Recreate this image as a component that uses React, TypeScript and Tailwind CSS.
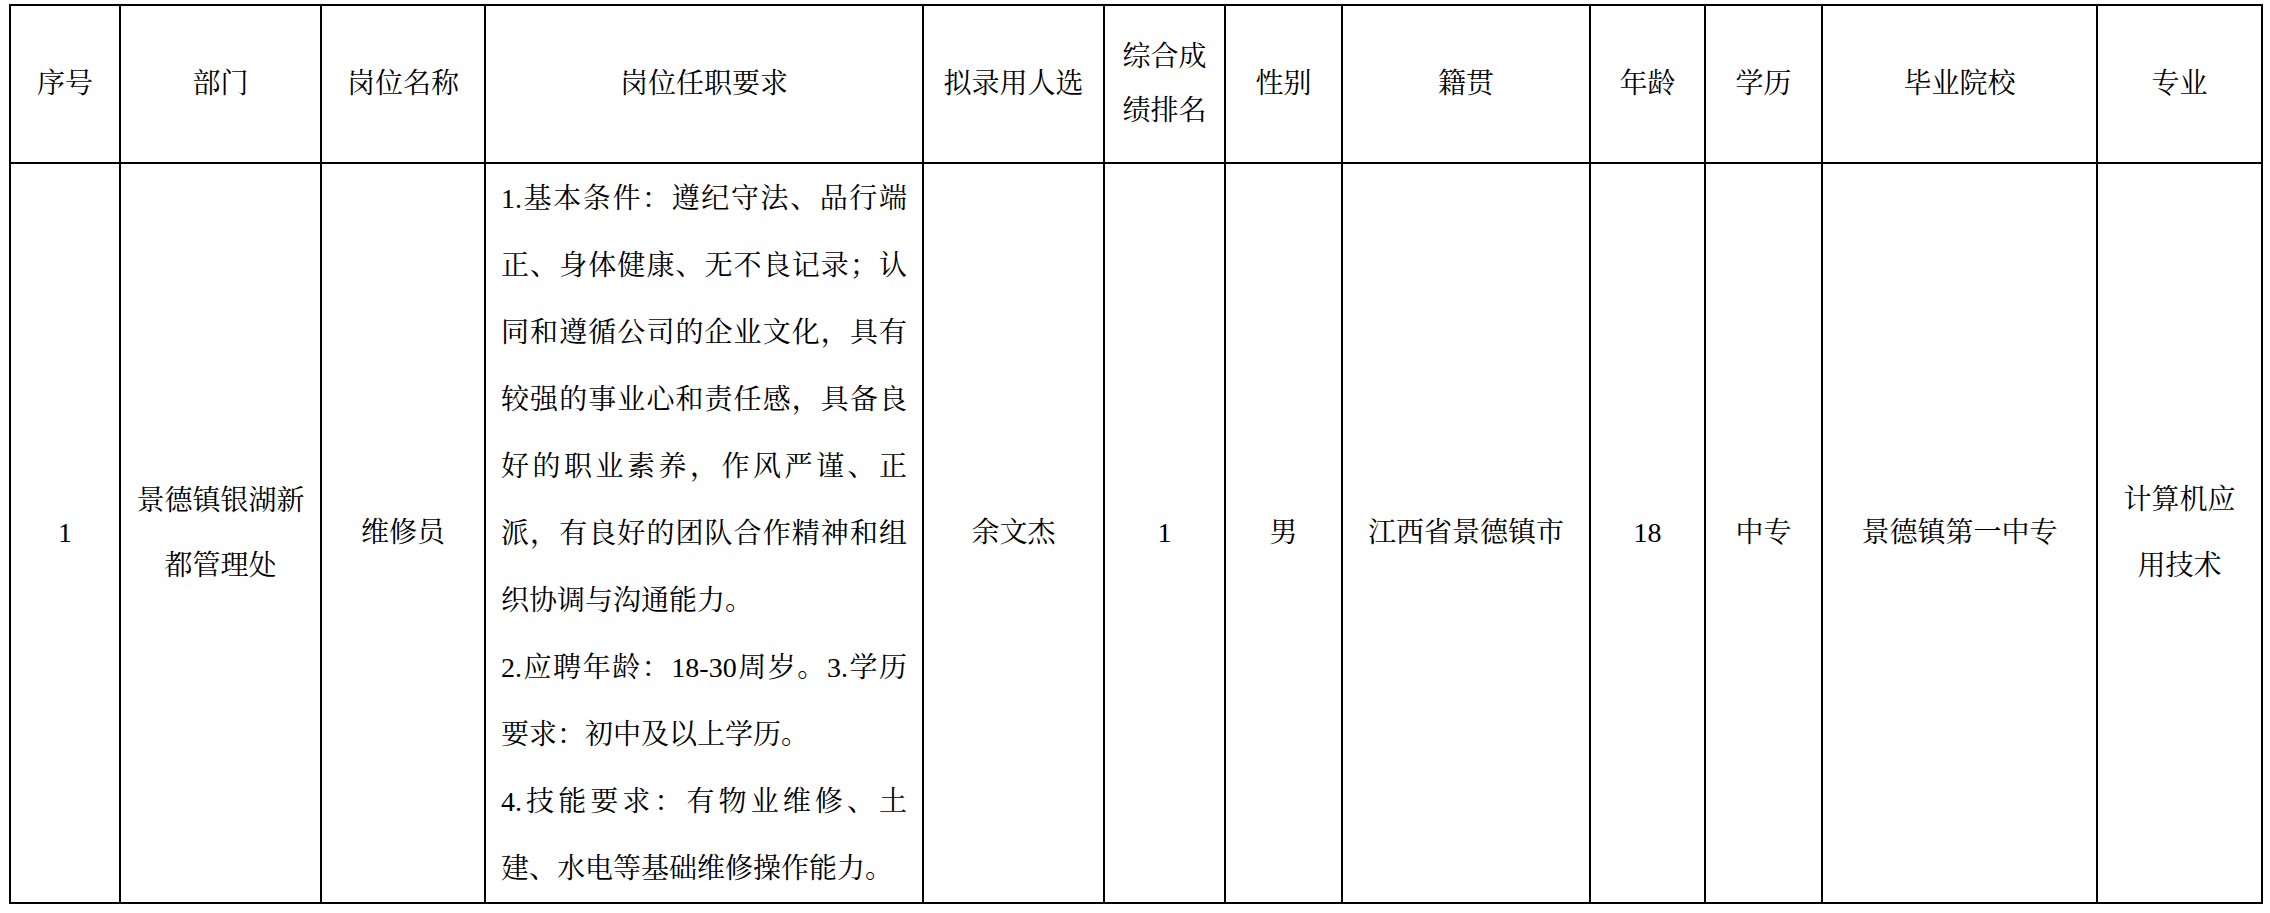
import React from "react";

const font = {
  fontFamily:
    '"Liberation Serif", "Noto Serif CJK SC", "Noto Sans CJK SC", serif',
};

const th = "border-2 border-black text-center align-middle font-normal p-0";
const td = "border-2 border-black text-center align-middle p-0";

function JLine({ children, justify }: { children: React.ReactNode; justify?: boolean }) {
  return (
    <div
      className={
        justify
          ? "text-justify [text-align-last:justify] leading-[67px]"
          : "text-left leading-[67px]"
      }
    >
      {children}
    </div>
  );
}

export default function App() {
  return (
    <div className="bg-white min-h-[913px] w-[2270px] pt-[4px] pl-[9px] text-black" style={font}>
      <table className="table-fixed border-collapse text-[28px] w-[2254px]">
        <colgroup>
          <col className="w-[110px]" />
          <col className="w-[201px]" />
          <col className="w-[164px]" />
          <col className="w-[438px]" />
          <col className="w-[181px]" />
          <col className="w-[121px]" />
          <col className="w-[117px]" />
          <col className="w-[248px]" />
          <col className="w-[115px]" />
          <col className="w-[117px]" />
          <col className="w-[275px]" />
          <col className="w-[165px]" />
        </colgroup>
        <thead>
          <tr className="h-[158px]">
            <th className={th}>序号</th>
            <th className={th}>部门</th>
            <th className={th}>岗位名称</th>
            <th className={th}>岗位任职要求</th>
            <th className={th}>拟录用人选</th>
            <th className={th}>
              <div className="leading-[54px]">
                综合成
                <br />
                绩排名
              </div>
            </th>
            <th className={th}>性别</th>
            <th className={th}>籍贯</th>
            <th className={th}>年龄</th>
            <th className={th}>学历</th>
            <th className={th}>毕业院校</th>
            <th className={th}>专业</th>
          </tr>
        </thead>
        <tbody>
          <tr className="h-[740px]">
            <td className={td}>1</td>
            <td className={td}>
              <div className="leading-[65px]">
                景德镇银湖新
                <br />
                都管理处
              </div>
            </td>
            <td className={td}>维修员</td>
            <td className={td}>
              <div className="px-[15px]">
                <JLine justify>1.基本条件：遵纪守法、品行端</JLine>
                <JLine justify>正、身体健康、无不良记录；认</JLine>
                <JLine justify>同和遵循公司的企业文化，具有</JLine>
                <JLine justify>较强的事业心和责任感，具备良</JLine>
                <JLine justify>好的职业素养，作风严谨、正</JLine>
                <JLine justify>派，有良好的团队合作精神和组</JLine>
                <JLine>织协调与沟通能力。</JLine>
                <JLine justify>2.应聘年龄：18-30周岁。3.学历</JLine>
                <JLine>要求：初中及以上学历。</JLine>
                <JLine justify>4.技能要求：有物业维修、土</JLine>
                <JLine>建、水电等基础维修操作能力。</JLine>
              </div>
            </td>
            <td className={td}>余文杰</td>
            <td className={td}>1</td>
            <td className={td}>男</td>
            <td className={td}>江西省景德镇市</td>
            <td className={td}>18</td>
            <td className={td}>中专</td>
            <td className={td}>景德镇第一中专</td>
            <td className={td}>
              <div className="leading-[66px]">
                计算机应
                <br />
                用技术
              </div>
            </td>
          </tr>
        </tbody>
      </table>
    </div>
  );
}
